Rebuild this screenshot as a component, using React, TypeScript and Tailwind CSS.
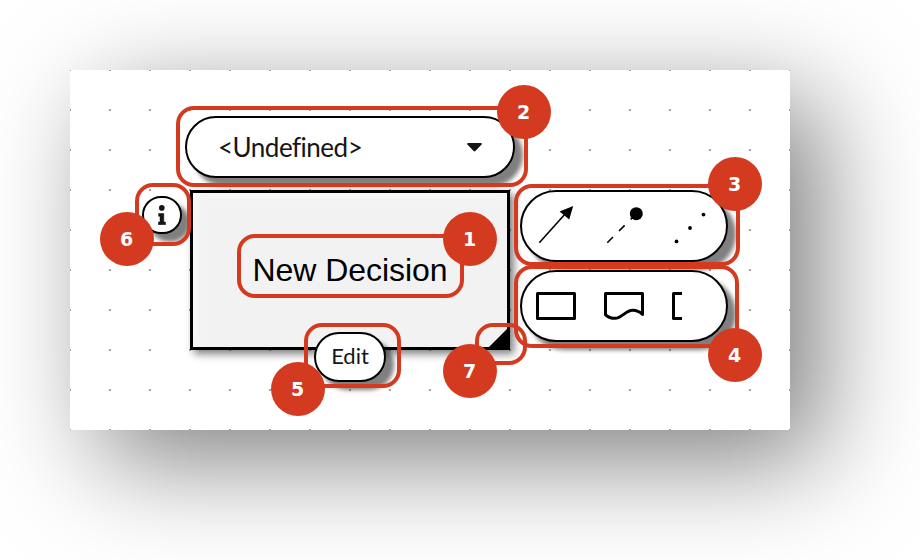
import type { ReactNode } from "react";

function Marker({ box, badge, label }: { box: string; badge: string; label: string }) {
  return (
    <div className={`absolute rounded-[18px] border-4 border-[#d33a20] ${box}`}>
      <div
        className={`absolute z-10 flex size-[54px] items-center justify-center rounded-full bg-[#d33a20] pr-px font-['DejaVu_Sans',sans-serif] text-[19px] leading-none font-bold text-white ${badge}`}
      >
        {label}
      </div>
    </div>
  );
}

function Pill({ className, children }: { className: string; children: ReactNode }) {
  return (
    <div
      className={`absolute flex items-center border-2 border-black bg-white shadow-[8px_8px_4px_rgba(0,0,0,0.5)] ${className}`}
    >
      {children}
    </div>
  );
}

export default function App() {
  return (
    <div className="h-[560px] w-[920px] overflow-hidden bg-white pt-[70px] pl-[70px]">
      <div className="relative h-[360px] w-[720px] bg-white shadow-[30px_30px_100px_rgba(0,0,0,0.5)]">
        <svg className="absolute inset-0" width="720" height="360">
          <defs>
            <pattern id="grid" width="40" height="40" patternUnits="userSpaceOnUse">
              <path d="M0 0h1v1H0zM39 0h1v1h-1zM0 39h1v1H0zM39 39h1v1h-1z" fill="#a3a3a3" />
            </pattern>
          </defs>
          <rect width="720" height="360" fill="url(#grid)" />
        </svg>

        {/* Decision node */}
        <div className="absolute top-[120px] left-[120px] flex h-[160px] w-[320px] items-center justify-center border-3 border-black bg-[#f2f2f2] shadow-[4px_4px_8px_rgba(0,0,0,0.5),inset_4px_4px_8px_rgba(255,255,255,0.5)]">
          <span className="font-['Liberation_Sans',Arial,sans-serif] text-[32px] leading-none tracking-[-0.05px] whitespace-nowrap text-black">
            New Decision
          </span>
          <svg className="absolute right-[-3px] bottom-[-3px]" width="24" height="24">
            <path d="M24 0V24H0Z" />
          </svg>
        </div>

        {/* Data type selector */}
        <Pill className="top-[46px] left-[115px] h-[62px] w-[330px] justify-between rounded-[31px] pr-[31px] pl-[31px]">
          <span className="font-[Lato,sans-serif] text-[26px] leading-none tracking-[-0.5px] whitespace-nowrap text-[#151515] [font-variant-ligatures:none]">
            &lt;Undefined&gt;
          </span>
          <svg width="15" height="9" viewBox="0 0 15 9">
            <path d="M1 0h13q1.2.3.6 1.4L8.4 8.1q-.9.8-1.8 0L.4 1.4Q-.2.3 1 0Z" fill="#151515" />
          </svg>
        </Pill>

        {/* Edge palette */}
        <Pill className="top-[120px] left-[450px] h-[72px] w-[208px] gap-[28px] rounded-[36px] pl-[14px]">
          <svg width="40" height="40" viewBox="536 206 40 40" overflow="visible">
            <path d="M539.3 242.7 566 213" stroke="#000" strokeWidth="1.6" />
            <path d="M573.2 206 559.6 211.5 569.2 219.6Z" />
          </svg>
          <svg width="40" height="40" viewBox="604 206 40 40" overflow="visible">
            <path d="M607.3 242.7 636.3 213.7" stroke="#000" strokeWidth="1.6" strokeDasharray="8 8.5" />
            <circle cx="636.3" cy="213.7" r="6.5" />
          </svg>
          <svg width="40" height="40" viewBox="672 206 40 40" overflow="visible">
            <circle cx="676.5" cy="241.4" r="1.9" />
            <circle cx="690" cy="228" r="1.9" />
            <circle cx="703.5" cy="214.6" r="1.9" />
          </svg>
        </Pill>

        {/* Node palette */}
        <Pill className="top-[200px] left-[450px] h-[72px] w-[208px] gap-[28px] rounded-[36px] pl-[14px]">
          <svg width="40" height="28" viewBox="0 0 40 28" fill="none" stroke="#000" strokeWidth="3" strokeLinejoin="round">
            <path d="M1.5 1.5h37v25h-37z" />
          </svg>
          <svg width="40" height="28" viewBox="0 0 40 28" fill="none" stroke="#000" strokeWidth="3" strokeLinejoin="round">
            <path d="M1.5 1.5h37V22.4C35.5 19.5 32 18.3 28.7 18.3C21.5 18.3 18 26.3 11 26.3C7 26.3 4 25 1.5 22.8Z" />
          </svg>
          <svg width="40" height="28" viewBox="0 0 40 28" fill="none" stroke="#000" strokeWidth="3" strokeLinejoin="round">
            <path d="M10 1.5H1.5v25H10" />
          </svg>
        </Pill>

        <Pill className="top-[262px] left-[244px] h-[50px] w-[72px] justify-center rounded-[25px] pb-[2px]">
          <span className="font-[Lato,sans-serif] text-[22px] leading-none text-[#151515]">Edit</span>
        </Pill>

        <Pill className="top-[126px] left-[72px] h-[38px] w-[40px] justify-center rounded-[20px]">
          <svg width="8" height="20" viewBox="0 0 8 20" fill="#151515">
            <circle cx="3.8" cy="2.9" r="2.8" />
            <path d="M.6 8.5H5.8V17H7.5V19.7H.3V17H2V11.2H.6Z" stroke="#151515" strokeWidth=".5" strokeLinejoin="round" />
          </svg>
        </Pill>

        <Marker label="1" box="left-[167px] top-[164px] h-[64px] w-[227px]" badge="-top-[26px] -right-[37px]" />
        <Marker label="2" box="left-[106px] top-[36px] h-[81px] w-[352px]" badge="-top-[25px] -right-[27px]" />
        <Marker label="3" box="left-[444px] top-[114px] h-[82px] w-[226px]" badge="-top-[31px] -right-[26px]" />
        <Marker label="4" box="left-[444px] top-[195px] h-[83px] w-[225px]" badge="-right-[27px] -bottom-[38px]" />
        <Marker label="5" box="left-[234px] top-[253px] h-[65px] w-[97px]" badge="-bottom-[32px] -left-[37px]" />
        <Marker label="6" box="left-[65px] top-[113px] h-[63px] w-[56px]" badge="-bottom-[24px] -left-[39px]" />
        <Marker label="7" box="left-[405px] top-[253px] h-[42px] w-[52px]" badge="-bottom-[37px] -left-[36px]" />
      </div>
    </div>
  );
}
